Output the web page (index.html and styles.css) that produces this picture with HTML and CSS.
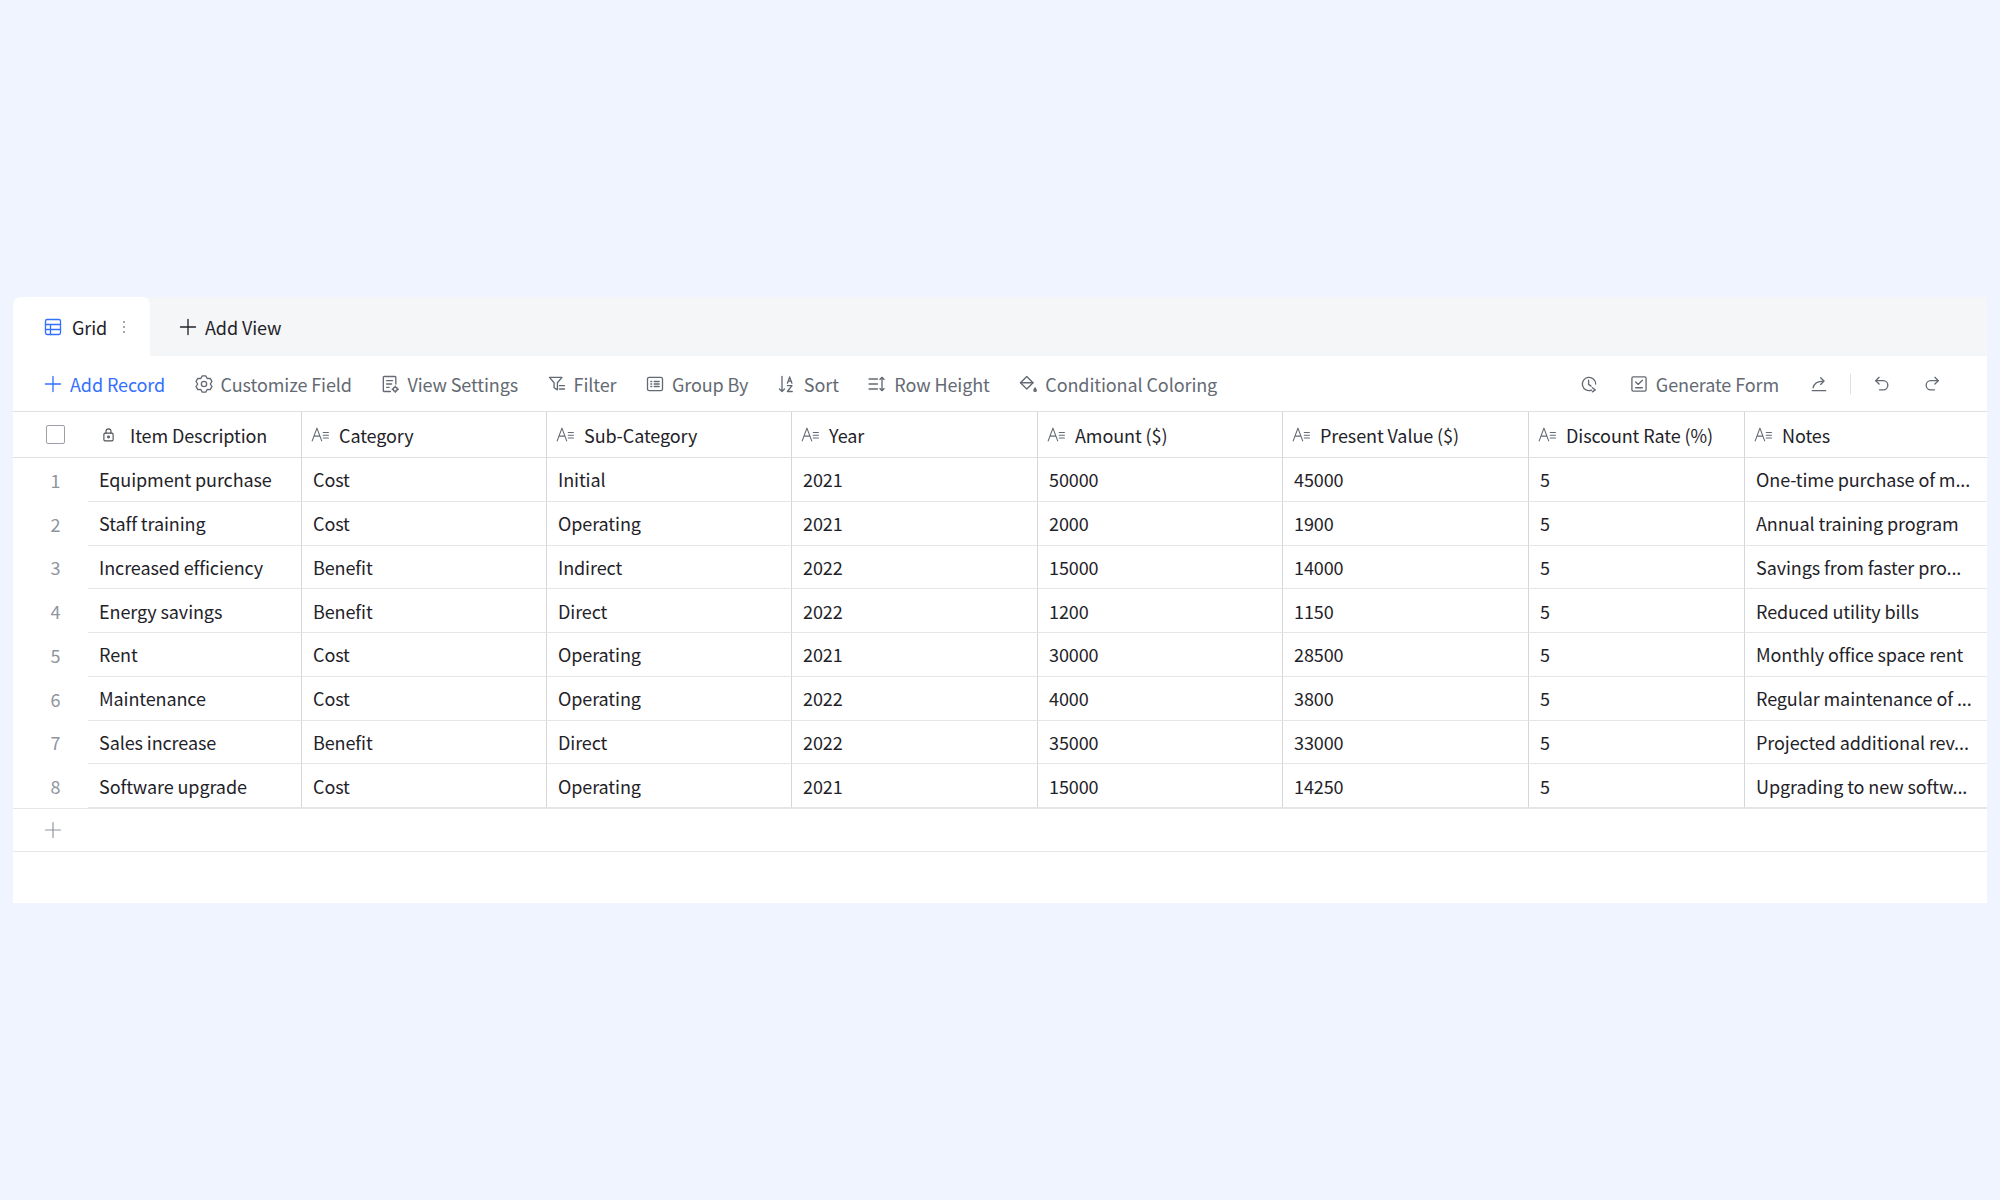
FILE: index.html
```html
<!DOCTYPE html>
<html lang="en">
<head>
<meta charset="utf-8">
<title>Grid</title>
<link rel="stylesheet" href="styles.css">
</head>
<body>
<div class="page">
  <div class="panel">
    <div class="tabbar">
      <div class="tab tab-active">
        <svg class="ic ic-blue" viewBox="0 0 24 24"><rect x="3" y="3" width="18" height="18" rx="2"/><path d="M3 9h18M3 15h18M9 9v12"/></svg>
        <span>Grid</span>
        <svg class="dots" viewBox="0 0 6 24"><circle cx="3" cy="6" r="1.3"/><circle cx="3" cy="12" r="1.3"/><circle cx="3" cy="18" r="1.3"/></svg>
      </div>
      <div class="tab tab-add">
        <svg class="ic" viewBox="0 0 24 24"><path d="M12 3v18M3 12h18"/></svg>
        <span>Add View</span>
      </div>
    </div>

    <div class="toolbar">
      <div class="tools">
        <div class="tool tool-primary">
          <svg class="ic" viewBox="0 0 24 24"><path d="M12 3v18M3 12h18"/></svg><span>Add Record</span>
        </div>
        <div class="tool">
          <svg class="ic" viewBox="0 0 24 24"><path d="M8.2 5.42L9.92 2.22H14.08L15.8 5.42L19.43 5.31L21.51 8.91L19.6 12L21.51 15.09L19.43 18.69L15.8 18.58L14.08 21.78H9.92L8.2 18.58L4.57 18.69L2.49 15.09L4.4 12L2.49 8.91L4.57 5.31Z"/><circle cx="12" cy="12" r="3.2"/></svg><span>Customize Field</span>
        </div>
        <div class="tool">
          <svg class="ic" viewBox="0 0 24 24"><path d="M12.5 21H5a1 1 0 0 1-1-1V4a1 1 0 0 1 1-1h13a1 1 0 0 1 1 1v8"/><path d="M8 8h7M8 12h6M8 16h3"/><circle cx="18.3" cy="18.3" r="2.4"/><path d="M18.3 14.6v1.3M18.3 20.7V22M14.6 18.3h1.3M20.7 18.3H22"/></svg><span>View Settings</span>
        </div>
        <div class="tool">
          <svg class="ic" viewBox="0 0 24 24"><path d="M3 4h15l-5.5 6.5V19l-4-2.5v-6z"/><path d="M15 14h6M15 18h6"/></svg><span>Filter</span>
        </div>
        <div class="tool">
          <svg class="ic" viewBox="0 0 24 24"><rect x="3" y="4" width="18" height="16" rx="2"/><path d="M7 9h1M11 9h6M7 12h1M11 12h6M7 15h1M11 15h6"/></svg><span>Group By</span>
        </div>
        <div class="tool">
          <svg class="ic" viewBox="0 0 24 24"><path d="M6 3v18M3 18l3 3 3-3"/><path d="M12.5 11l2.7-7.5 2.7 7.5M13.5 8.5h3.4M12.5 14h5.5l-5.5 7h5.8"/></svg><span>Sort</span>
        </div>
        <div class="tool">
          <svg class="ic" viewBox="0 0 24 24"><path d="M2.5 6h10M2.5 12h10M2.5 18h10"/><path d="M18 4v16M15.5 6.5L18 4l2.5 2.5M15.5 17.5L18 20l2.5-2.5"/></svg><span>Row Height</span>
        </div>
        <div class="tool">
          <svg class="ic" viewBox="0 0 24 24"><path d="M10.5 3L3 10.5l7.5 7.5 7.5-7.5z"/><path d="M3 10.5h15"/><path class="fill" d="M20.5 15.5s-2.2 2.6-2.2 3.9a2.2 2.2 0 0 0 4.4 0c0-1.3-2.2-3.9-2.2-3.9z"/></svg><span>Conditional Coloring</span>
        </div>
      </div>
      <div class="tools tools-right">
        <div class="tool icon-only">
          <svg class="ic" viewBox="0 0 24 24"><path d="M20 12a8 8 0 1 0-5 7.4"/><path d="M11.5 7.5v5l3 2"/><path d="M16 16.5l3.5 2.5-3.5 2.5"/></svg>
        </div>
        <div class="tool">
          <svg class="ic" viewBox="0 0 24 24"><rect x="3.5" y="3.5" width="17" height="17" rx="1.5"/><path d="M8 9.5l3 3 5-5M8 16.5h8"/></svg><span>Generate Form</span>
        </div>
        <div class="tool icon-only">
          <svg class="ic" viewBox="0 0 24 24"><path d="M4 20h16"/><path d="M5 16.5C6 11 10 8.5 17.5 8.5"/><path d="M14 4.5l4 4-4 4"/></svg>
        </div>
        <div class="divider"></div>
        <div class="tool icon-only">
          <svg class="ic" viewBox="0 0 24 24"><path d="M8.5 4L4.5 8l4 4"/><path d="M4.5 8h9a5.5 5.5 0 0 1 0 11H9"/></svg>
        </div>
        <div class="tool icon-only">
          <svg class="ic" viewBox="0 0 24 24"><path d="M15.5 4l4 4-4 4"/><path d="M19.5 8h-9a5.5 5.5 0 0 0 0 11H15"/></svg>
        </div>
      </div>
    </div>

    <div class="grid">
      <div class="hcell hfirst">
        <span class="checkbox"></span>
        <svg class="ic lock" viewBox="0 0 24 24"><rect x="5.5" y="10" width="13" height="11" rx="1.5"/><path d="M8.5 10V7.5a3.5 3.5 0 0 1 7 0V10"/><circle cx="12" cy="15.5" r="1.3"/></svg>
        <span>Item Description</span>
      </div>
      <div class="hcell"><svg class="ic ftype" viewBox="0 0 24 24"><path d="M1.5 20L7.5 4l6 16M3.9 14h7.2M15.5 9.5h6.5M15.5 13h6.5M15.5 16.5h6.5"/></svg><span>Category</span></div>
      <div class="hcell"><svg class="ic ftype" viewBox="0 0 24 24"><path d="M1.5 20L7.5 4l6 16M3.9 14h7.2M15.5 9.5h6.5M15.5 13h6.5M15.5 16.5h6.5"/></svg><span>Sub-Category</span></div>
      <div class="hcell"><svg class="ic ftype" viewBox="0 0 24 24"><path d="M1.5 20L7.5 4l6 16M3.9 14h7.2M15.5 9.5h6.5M15.5 13h6.5M15.5 16.5h6.5"/></svg><span>Year</span></div>
      <div class="hcell"><svg class="ic ftype" viewBox="0 0 24 24"><path d="M1.5 20L7.5 4l6 16M3.9 14h7.2M15.5 9.5h6.5M15.5 13h6.5M15.5 16.5h6.5"/></svg><span>Amount ($)</span></div>
      <div class="hcell"><svg class="ic ftype" viewBox="0 0 24 24"><path d="M1.5 20L7.5 4l6 16M3.9 14h7.2M15.5 9.5h6.5M15.5 13h6.5M15.5 16.5h6.5"/></svg><span>Present Value ($)</span></div>
      <div class="hcell"><svg class="ic ftype" viewBox="0 0 24 24"><path d="M1.5 20L7.5 4l6 16M3.9 14h7.2M15.5 9.5h6.5M15.5 13h6.5M15.5 16.5h6.5"/></svg><span>Discount Rate (%)</span></div>
      <div class="hcell hlast"><svg class="ic ftype" viewBox="0 0 24 24"><path d="M1.5 20L7.5 4l6 16M3.9 14h7.2M15.5 9.5h6.5M15.5 13h6.5M15.5 16.5h6.5"/></svg><span>Notes</span></div>

      <div class="num">1</div><div class="cell">Equipment purchase</div><div class="cell">Cost</div><div class="cell">Initial</div><div class="cell">2021</div><div class="cell">50000</div><div class="cell">45000</div><div class="cell">5</div><div class="cell last">One-time purchase of m...</div>
      <div class="num">2</div><div class="cell">Staff training</div><div class="cell">Cost</div><div class="cell">Operating</div><div class="cell">2021</div><div class="cell">2000</div><div class="cell">1900</div><div class="cell">5</div><div class="cell last">Annual training program</div>
      <div class="num">3</div><div class="cell">Increased efficiency</div><div class="cell">Benefit</div><div class="cell">Indirect</div><div class="cell">2022</div><div class="cell">15000</div><div class="cell">14000</div><div class="cell">5</div><div class="cell last">Savings from faster pro...</div>
      <div class="num">4</div><div class="cell">Energy savings</div><div class="cell">Benefit</div><div class="cell">Direct</div><div class="cell">2022</div><div class="cell">1200</div><div class="cell">1150</div><div class="cell">5</div><div class="cell last">Reduced utility bills</div>
      <div class="num">5</div><div class="cell">Rent</div><div class="cell">Cost</div><div class="cell">Operating</div><div class="cell">2021</div><div class="cell">30000</div><div class="cell">28500</div><div class="cell">5</div><div class="cell last">Monthly office space rent</div>
      <div class="num">6</div><div class="cell">Maintenance</div><div class="cell">Cost</div><div class="cell">Operating</div><div class="cell">2022</div><div class="cell">4000</div><div class="cell">3800</div><div class="cell">5</div><div class="cell last">Regular maintenance of ...</div>
      <div class="num">7</div><div class="cell">Sales increase</div><div class="cell">Benefit</div><div class="cell">Direct</div><div class="cell">2022</div><div class="cell">35000</div><div class="cell">33000</div><div class="cell">5</div><div class="cell last">Projected additional rev...</div>
      <div class="num">8</div><div class="cell">Software upgrade</div><div class="cell">Cost</div><div class="cell">Operating</div><div class="cell">2021</div><div class="cell">15000</div><div class="cell">14250</div><div class="cell">5</div><div class="cell last">Upgrading to new softw...</div>
    </div>

    <div class="addrow">
      <svg class="ic addplus" viewBox="0 0 24 24"><path d="M12 3v18M3 12h18"/></svg>
    </div>
  </div>
</div>
</body>
</html>
```

FILE: styles.css
```css
* { box-sizing: border-box; }

html, body {
  margin: 0;
  padding: 0;
}

body {
  background: #eff4fe;
  font-family: "Noto Sans CJK SC", "Noto Sans", sans-serif;
  font-size: 18px;
  letter-spacing: -0.1px;
  color: #1f2329;
}

.page {
  padding: 297px 13px 0 13px;
}

.panel {
  width: 1974px;
  height: 606px;
  background: #ffffff;
  border-radius: 8px 0 0 0;
  overflow: hidden;
}

.ic {
  width: 20px;
  height: 20px;
  flex: none;
  fill: none;
  stroke: currentColor;
  stroke-width: 1.6;
  stroke-linecap: round;
  stroke-linejoin: round;
}

.ic .fill {
  fill: currentColor;
  stroke: none;
}

.ic-blue {
  color: #3370ff;
}

/* tab bar */
.tabbar {
  height: 59px;
  display: flex;
  background: #f5f6f7;
}

.tab {
  display: flex;
  align-items: center;
  height: 100%;
}

.tab-active {
  width: 137px;
  padding-left: 30px;
  gap: 9px;
  background: #ffffff;
  border-radius: 8px 8px 0 0;
}

.dots {
  width: 6px;
  height: 20px;
  margin-left: 5px;
  fill: #8f959e;
}

.tab-add {
  padding-left: 28px;
  gap: 7px;
}

/* toolbar */
.toolbar {
  height: 56px;
  display: flex;
  align-items: center;
  justify-content: space-between;
  padding: 0 45px 0 30px;
  border-bottom: 1px solid #dee0e3;
  color: #646a73;
}

.tools {
  display: flex;
  align-items: center;
  gap: 28.5px;
}

.tool {
  display: flex;
  align-items: center;
  gap: 7px;
}

.tool-primary {
  color: #3370ff;
}

.tools-right {
  gap: 30px;
}

.divider {
  width: 1px;
  height: 20px;
  background: #dee0e3;
  margin: 0 -9px;
}

/* grid */
.grid {
  display: grid;
  grid-template-columns: 75px 214px 245px 245px 246px 245px 246px 216px 242px;
  grid-template-rows: 46px repeat(8, 43.75px);
}

.hcell {
  display: flex;
  align-items: center;
  gap: 9px;
  padding-left: 9px;
  border-right: 1px solid #d5d7db;
  border-bottom: 1px solid #dee0e3;
  color: #1f2329;
  white-space: nowrap;
  overflow: hidden;
}

.hfirst {
  grid-column: span 2;
  padding-left: 33px;
  gap: 0;
}

.checkbox {
  width: 19px;
  height: 19px;
  border: 1.6px solid #9ca0a7;
  border-radius: 2px;
  margin-right: 35px;
}

.lock {
  width: 17px;
  height: 17px;
  margin-right: 13px;
  color: #4e5359;
}

.ftype {
  width: 19px;
  height: 19px;
  color: #646a73;
  stroke-width: 1.4;
}

.hlast {
  border-right: none;
}

.num {
  display: flex;
  align-items: center;
  justify-content: center;
  padding-left: 10px;
  color: #8f959e;
}

.cell {
  display: flex;
  align-items: center;
  padding: 0 7px 0 11px;
  border-right: 1px solid #d5d7db;
  border-bottom: 1px solid #e4e6e9;
  white-space: nowrap;
  overflow: hidden;
  min-width: 0;
}

.cell.last {
  border-right: none;
}

.addrow {
  height: 44px;
  display: flex;
  align-items: center;
  padding-left: 30px;
  border-top: 1px solid #e4e6e9;
  border-bottom: 1px solid #e4e6e9;
  color: #8f959e;
}

.addplus {
  width: 20px;
  height: 20px;
  stroke-width: 1.4;
}
```
